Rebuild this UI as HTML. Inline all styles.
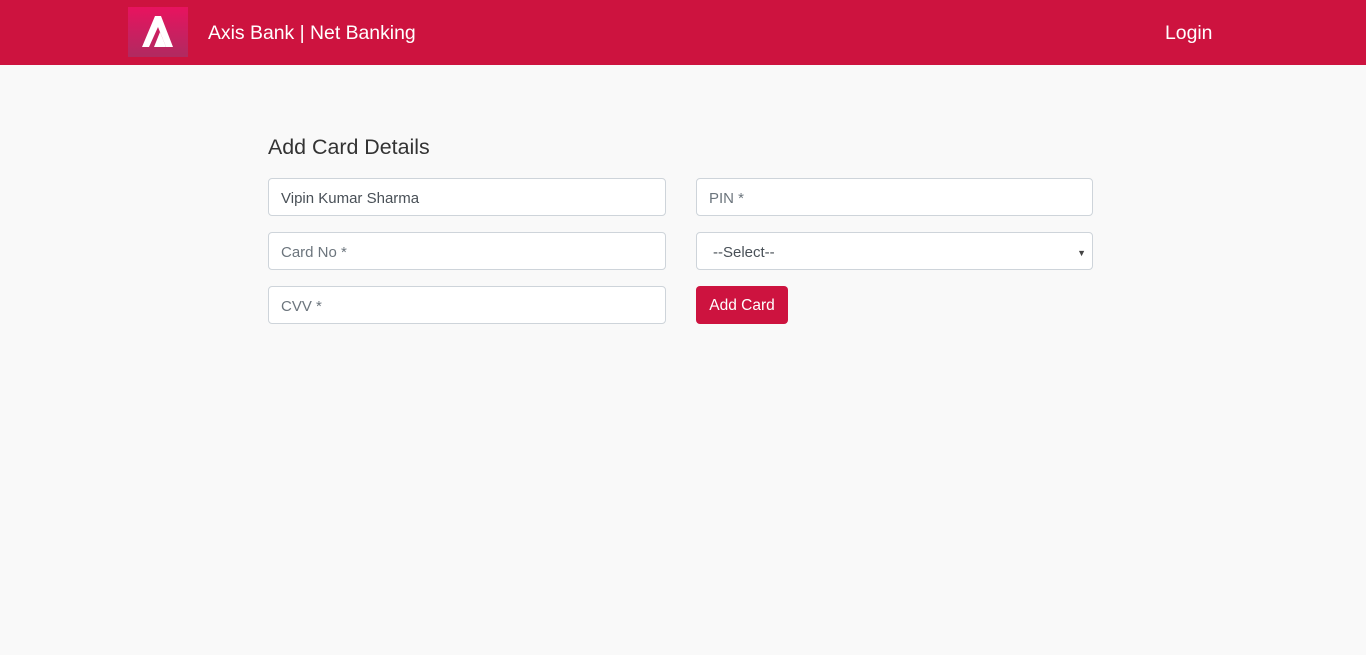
<!DOCTYPE html>
<html><head><meta charset="utf-8"><style>
*{box-sizing:border-box;margin:0;padding:0}
body{width:1366px;height:655px;background:#f9f9f9;font-family:"Liberation Sans",sans-serif;overflow:hidden}
.nav{height:65px;background:#cd133f;position:relative;color:#fff}
.logo{position:absolute;left:128px;top:7px;width:60px;height:50px;background:linear-gradient(#e8135f,#b02a60)}
.brand{position:absolute;left:208px;top:22px;font-size:19.4px}
.login{position:absolute;left:1165px;top:22px;font-size:19.4px}
h3{position:absolute;left:268px;top:135px;font-size:21.4px;font-weight:normal;color:#333}
.f{position:absolute;width:398px;height:38px;background:#fff;border:1px solid #ced4da;border-radius:4px;font-size:15px;color:#6c757d;padding:11px 12px 0;line-height:18px}
.btn{position:absolute;left:696px;top:286px;width:92px;height:38px;background:#cd133f;color:#fff;border-radius:4px;font-size:15.5px;text-align:center;line-height:40px}
</style></head><body>
<div class="nav">
<div class="logo"><svg width="60" height="50" viewBox="0 0 60 50"><polygon points="27,9 33,9 45,40 38,40 30,20 21,40 14,40" fill="#fff"/><polygon points="32,25 38,40 26,40" fill="#fff"/></svg></div>
<div class="brand">Axis Bank | Net Banking</div>
<div class="login">Login</div>
</div>
<h3>Add Card Details</h3>
<div class="f" style="left:268px;top:178px;color:#495057">Vipin Kumar Sharma</div>
<div class="f" style="left:696px;top:178px;width:397px">PIN *</div>
<div class="f" style="left:268px;top:232px">Card No *</div>
<div class="f" style="left:696px;top:232px;width:397px;color:#495057;padding-left:16px">--Select--<span style="position:absolute;right:6px;top:11px;font-size:9px;color:#444">▼</span></div>
<div class="f" style="left:268px;top:286px">CVV *</div>
<div class="btn">Add Card</div>
</body></html>
